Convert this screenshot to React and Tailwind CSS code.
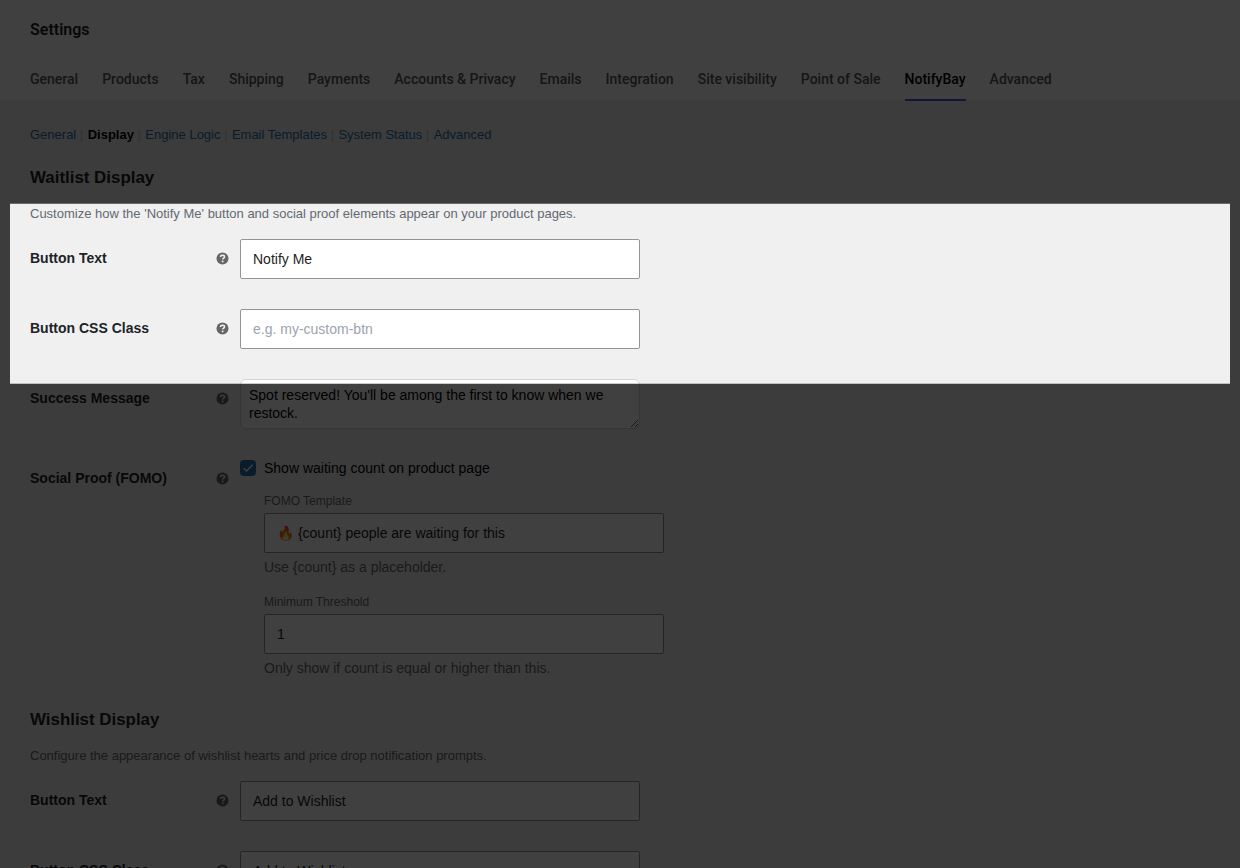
import clsx from 'clsx'

const TABS = [
  'General',
  'Products',
  'Tax',
  'Shipping',
  'Payments',
  'Accounts & Privacy',
  'Emails',
  'Integration',
  'Site visibility',
  'Point of Sale',
  'NotifyBay',
  'Advanced',
]

const SECTIONS = ['General', 'Display', 'Engine Logic', 'Email Templates', 'System Status', 'Advanced']

function HelpTip() {
  return (
    <svg viewBox="0 0 13 13" className="mt-px size-[13px] shrink-0" aria-hidden="true">
      <circle cx="6.5" cy="6.5" r="6" fill="#666" />
      <path
        d="M4.5 5C4.5 3.8 5.4 3.3 6.5 3.3s2 .6 2 1.6c0 1.2-1.8 1.3-1.8 2.5"
        fill="none"
        stroke="#f0f0f1"
        strokeWidth="1.5"
      />
      <circle cx="6.65" cy="9.4" r="0.95" fill="#f0f0f1" />
    </svg>
  )
}

function TextInput({ className, ...props }) {
  return (
    <input
      type="text"
      className={clsx(
        'block h-10 w-[400px] rounded-[2px] border border-[#949494] bg-white px-3 text-sm text-[#1e1e1e] placeholder:text-[#9ca3af] outline-none',
        className
      )}
      {...props}
    />
  )
}

function Row({ label, children }) {
  return (
    <div className="flex">
      <div className="mt-[25px] flex h-[18px] w-[210px] shrink-0 items-center justify-between pr-[11px]">
        <span className="text-sm leading-[18px] font-semibold text-[#1d2327]">{label}</span>
        <HelpTip />
      </div>
      <div className="py-[15px]">{children}</div>
    </div>
  )
}

function SectionTitle({ title, description }) {
  return (
    <>
      <h2 className="text-[16.9px] leading-6 font-semibold text-[#1d2327]">{title}</h2>
      <p className="mt-[14px] h-5 text-[13px] leading-5 text-[#646970]">{description}</p>
    </>
  )
}

// Dims everything on the page except the highlighted area
function Spotlight() {
  return (
    <div className="pointer-events-none absolute left-[10px] top-[203px] h-[181px] w-[1220px] border-t border-b border-t-black/55 border-b-black/20 shadow-[0_0_0_2000px_rgba(0,0,0,0.75)]" />
  )
}

export default function App() {
  return (
    <div className="relative h-[868px] w-full overflow-hidden bg-[#f0f0f0] font-['Liberation_Sans',Arial,sans-serif]">
      <header className="h-[100px] bg-white px-[30px] font-['Roboto',sans-serif]">
        <h1 className="pt-[18px] text-base leading-6 font-semibold text-[#1e1e1e]">Settings</h1>
        <nav className="mt-[16px] flex gap-[24.02px]">
          {TABS.map((tab) => (
            <a
              key={tab}
              className={clsx(
                'h-[43px] border-b-2 pt-[11px] text-sm leading-5 font-medium whitespace-nowrap',
                tab === 'NotifyBay' ? 'border-[#3858e9] text-black' : 'border-transparent text-[#50575e]'
              )}
            >
              {tab}
            </a>
          ))}
        </nav>
      </header>

      <main className="px-[30px] pt-[25px]">
        <ul className="flex h-5 gap-[0.8px] text-[13px] leading-5">
          {SECTIONS.map((section, i) => (
            <li key={section} className="whitespace-pre text-[#c3c4c7]">
              <a className={section === 'Display' ? 'font-semibold text-black' : 'text-[#2271b1]'}>{section}</a>
              {i < SECTIONS.length - 1 && ' | '}
            </li>
          ))}
        </ul>

        <section className="mt-[21px]">
          <SectionTitle
            title="Waitlist Display"
            description="Customize how the 'Notify Me' button and social proof elements appear on your product pages."
          />
          <Row label="Button Text">
            <TextInput defaultValue="Notify Me" />
          </Row>
          <Row label="Button CSS Class">
            <TextInput placeholder="e.g. my-custom-btn" />
          </Row>
          <Row label="Success Message">
            <textarea
              className="block h-[50px] w-[400px] overflow-hidden rounded-md border border-[#d1d5db] bg-white px-2 py-[6px] text-sm leading-[18px] text-black outline-none"
              defaultValue="Spot reserved! You'll be among the first to know when we restock."
            />
          </Row>
          <Row label="Social Proof (FOMO)">
            <label className="flex h-[18px] items-center gap-2 text-sm text-black">
              <span className="flex size-4 items-center justify-center rounded bg-[#2271b1]">
                <svg viewBox="0 0 16 16" className="size-4" fill="none" stroke="#fff" strokeWidth="1.4">
                  <path d="M3.6 8.2 6.6 11 12.6 4.8" />
                </svg>
              </span>
              Show waiting count on product page
            </label>
            <div className="pl-6 text-sm text-[#646970]">
              <p className="mt-[15px] h-[18px] text-xs leading-[18px]">FOMO Template</p>
              <TextInput className="mt-[3px]" defaultValue="🔥 {count} people are waiting for this" />
              <p className="mt-1 h-5 leading-5">Use {'{count}'} as a placeholder.</p>
              <p className="mt-4 h-[18px] text-xs leading-[18px]">Minimum Threshold</p>
              <TextInput className="mt-[3px]" defaultValue="1" />
              <p className="mt-1 h-5 leading-5">Only show if count is equal or higher than this.</p>
            </div>
          </Row>
        </section>

        <section className="mt-[15px]">
          <SectionTitle
            title="Wishlist Display"
            description="Configure the appearance of wishlist hearts and price drop notification prompts."
          />
          <Row label="Button Text">
            <TextInput defaultValue="Add to Wishlist" />
          </Row>
          <Row label="Button CSS Class">
            <TextInput defaultValue="Add to Wishlist" />
          </Row>
        </section>
      </main>

      <Spotlight />
    </div>
  )
}
